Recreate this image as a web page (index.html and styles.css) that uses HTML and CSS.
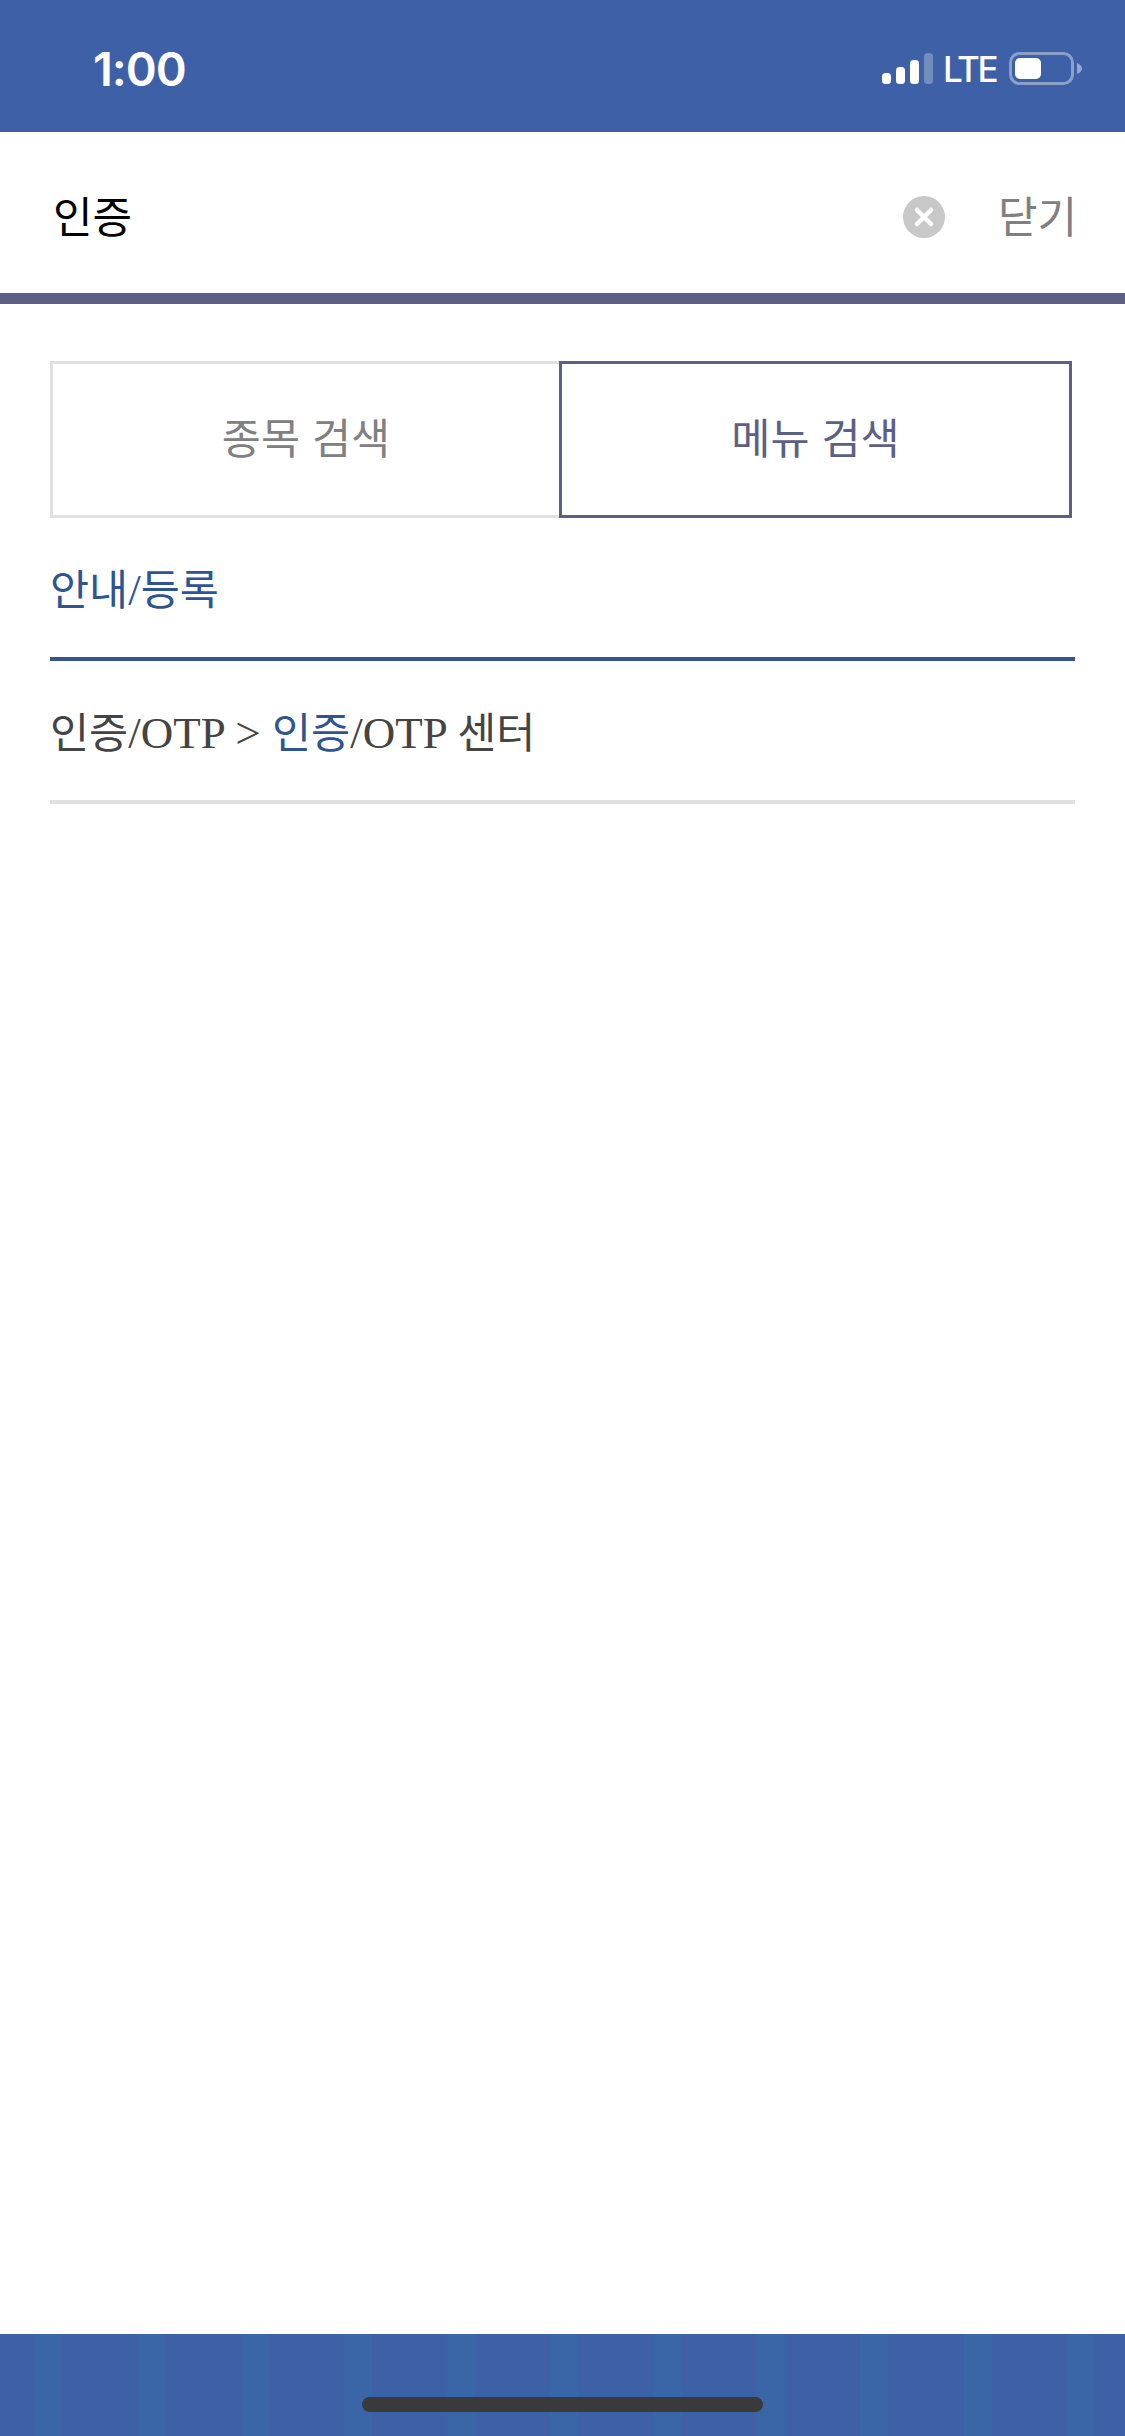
FILE: index.html
```html
<!DOCTYPE html>
<html lang="ko">

<head>
    <meta charset="utf-8">
    <title>메뉴 검색</title>
    <link rel="stylesheet" href="styles.css">
</head>

<body>
    <div id="container">
        <div class="status-bar">
            <span class="clock">1:00</span>
            <div class="status-icons">
                <svg class="signal" width="51" height="31" viewBox="0 0 51 31">
                    <rect x="0" y="20" width="9" height="11" rx="3.5" fill="#fff"></rect>
                    <rect x="14" y="14" width="9" height="17" rx="3.5" fill="#fff"></rect>
                    <rect x="28" y="7" width="9" height="24" rx="3.5" fill="#fff"></rect>
                    <rect x="42" y="0" width="9" height="31" rx="3.5" fill="#fff" fill-opacity="0.28"></rect>
                </svg>
                <span class="lte">LTE</span>
                <svg class="battery" width="73" height="33" viewBox="0 0 73 33">
                    <rect x="1.5" y="1.5" width="62" height="30" rx="9" fill="none" stroke="#fff" stroke-opacity="0.4" stroke-width="3"></rect>
                    <rect x="6" y="6" width="26" height="21" rx="5" fill="#fff"></rect>
                    <path d="M68 11 C71 12 73 14 73 16.5 C73 19 71 21 68 22 Z" fill="#fff" fill-opacity="0.45"></path>
                </svg>
            </div>
        </div>

        <div class="search-bar">
            <span class="keyword">인증</span>
            <svg class="clear" width="42" height="42" viewBox="0 0 42 42">
                <circle cx="21" cy="21" r="21" fill="#c8c8c8"></circle>
                <path d="M14 14 L28 28 M28 14 L14 28" stroke="#fff" stroke-width="4.5" stroke-linecap="round"></path>
            </svg>
            <span class="close">닫기</span>
        </div>

        <div class="content">
            <div class="tabs">
                <div class="tab">종목 검색</div>
                <div class="tab on">메뉴 검색</div>
            </div>
            <div class="group-title">안내<span class="en">/</span>등록</div>
            <div class="result">인증<span class="en">/OTP &gt; </span><span class="hit">인증</span><span class="en">/OTP </span>센터</div>
        </div>

        <div class="bottom-bar">
            <div class="home-bar"></div>
        </div>
    </div>
</body>

</html>
```

FILE: styles.css
```css
* {
    margin: 0;
    padding: 0;
    box-sizing: border-box;
}

body {
    background: #fff;
    font-family: "Liberation Serif", "Noto Sans CJK KR", serif;
}

#container {
    width: 1125px;
    height: 2436px;
    display: flex;
    flex-direction: column;
    overflow: hidden;
}

.status-bar {
    height: 132px;
    flex: none;
    background: #3e60a6;
    display: flex;
    justify-content: space-between;
    align-items: center;
    padding: 5px 43px 0 93px;
    color: #fff;
}

.clock {
    font-family: Inter, sans-serif;
    font-size: 47px;
    font-weight: 600;
    letter-spacing: -1px;
}

.status-icons {
    display: flex;
    align-items: center;
}

.lte {
    font-family: Inter, sans-serif;
    font-size: 35px;
    font-weight: 500;
    letter-spacing: -2.5px;
    margin: 0 13px 0 10px;
}

.search-bar {
    height: 172px;
    flex: none;
    display: flex;
    align-items: center;
    border-bottom: 11px solid #5e5f85;
    padding: 8px 48px 0 53px;
    font-family: "Noto Sans CJK KR", sans-serif;
    font-size: 43px;
}

.keyword {
    color: #000;
    flex: 1;
    margin-bottom: 5px;
}

.clear {
    margin-right: 53px;
}

.close {
    color: #808080;
    margin-bottom: 5px;
}

.content {
    flex: 1;
    padding: 57px 50px 0;
}

.tabs {
    display: flex;
    height: 157px;
    width: 1022px;
    font-family: "Noto Sans CJK KR", sans-serif;
    font-size: 42.5px;
}

.tab {
    flex: 0 0 509px;
    display: flex;
    align-items: center;
    justify-content: center;
    border: 3px solid #e0e0e0;
    border-right: 0;
    color: #808080;
    padding-bottom: 8px;
}

.tab.on {
    flex: 1;
    border: 3px solid #5e5f85;
    color: #5e5f85;
}

.group-title {
    width: 1025px;
    height: 143px;
    padding-top: 44px;
    font-size: 42.5px;
    line-height: 56px;
    color: #2f5590;
    border-bottom: 4px solid #34558c;
}

.result {
    width: 1025px;
    height: 143px;
    padding-top: 44px;
    font-size: 42.5px;
    line-height: 56px;
    color: #444;
    border-bottom: 4px solid #e0e0e0;
}

.en {
    font-size: 45px;
}

.hit {
    color: #2f5590;
}

.bottom-bar {
    height: 102px;
    flex: none;
    background: repeating-linear-gradient(90deg, #3a66a8 0, #3a66a8 28px, #3e60a6 28px, #3e60a6 103.3px) 34px 0;
    display: flex;
    justify-content: center;
    padding-top: 63px;
}

.home-bar {
    width: 401px;
    height: 15px;
    border-radius: 8px;
    background: #3a3a3a;
}
```
